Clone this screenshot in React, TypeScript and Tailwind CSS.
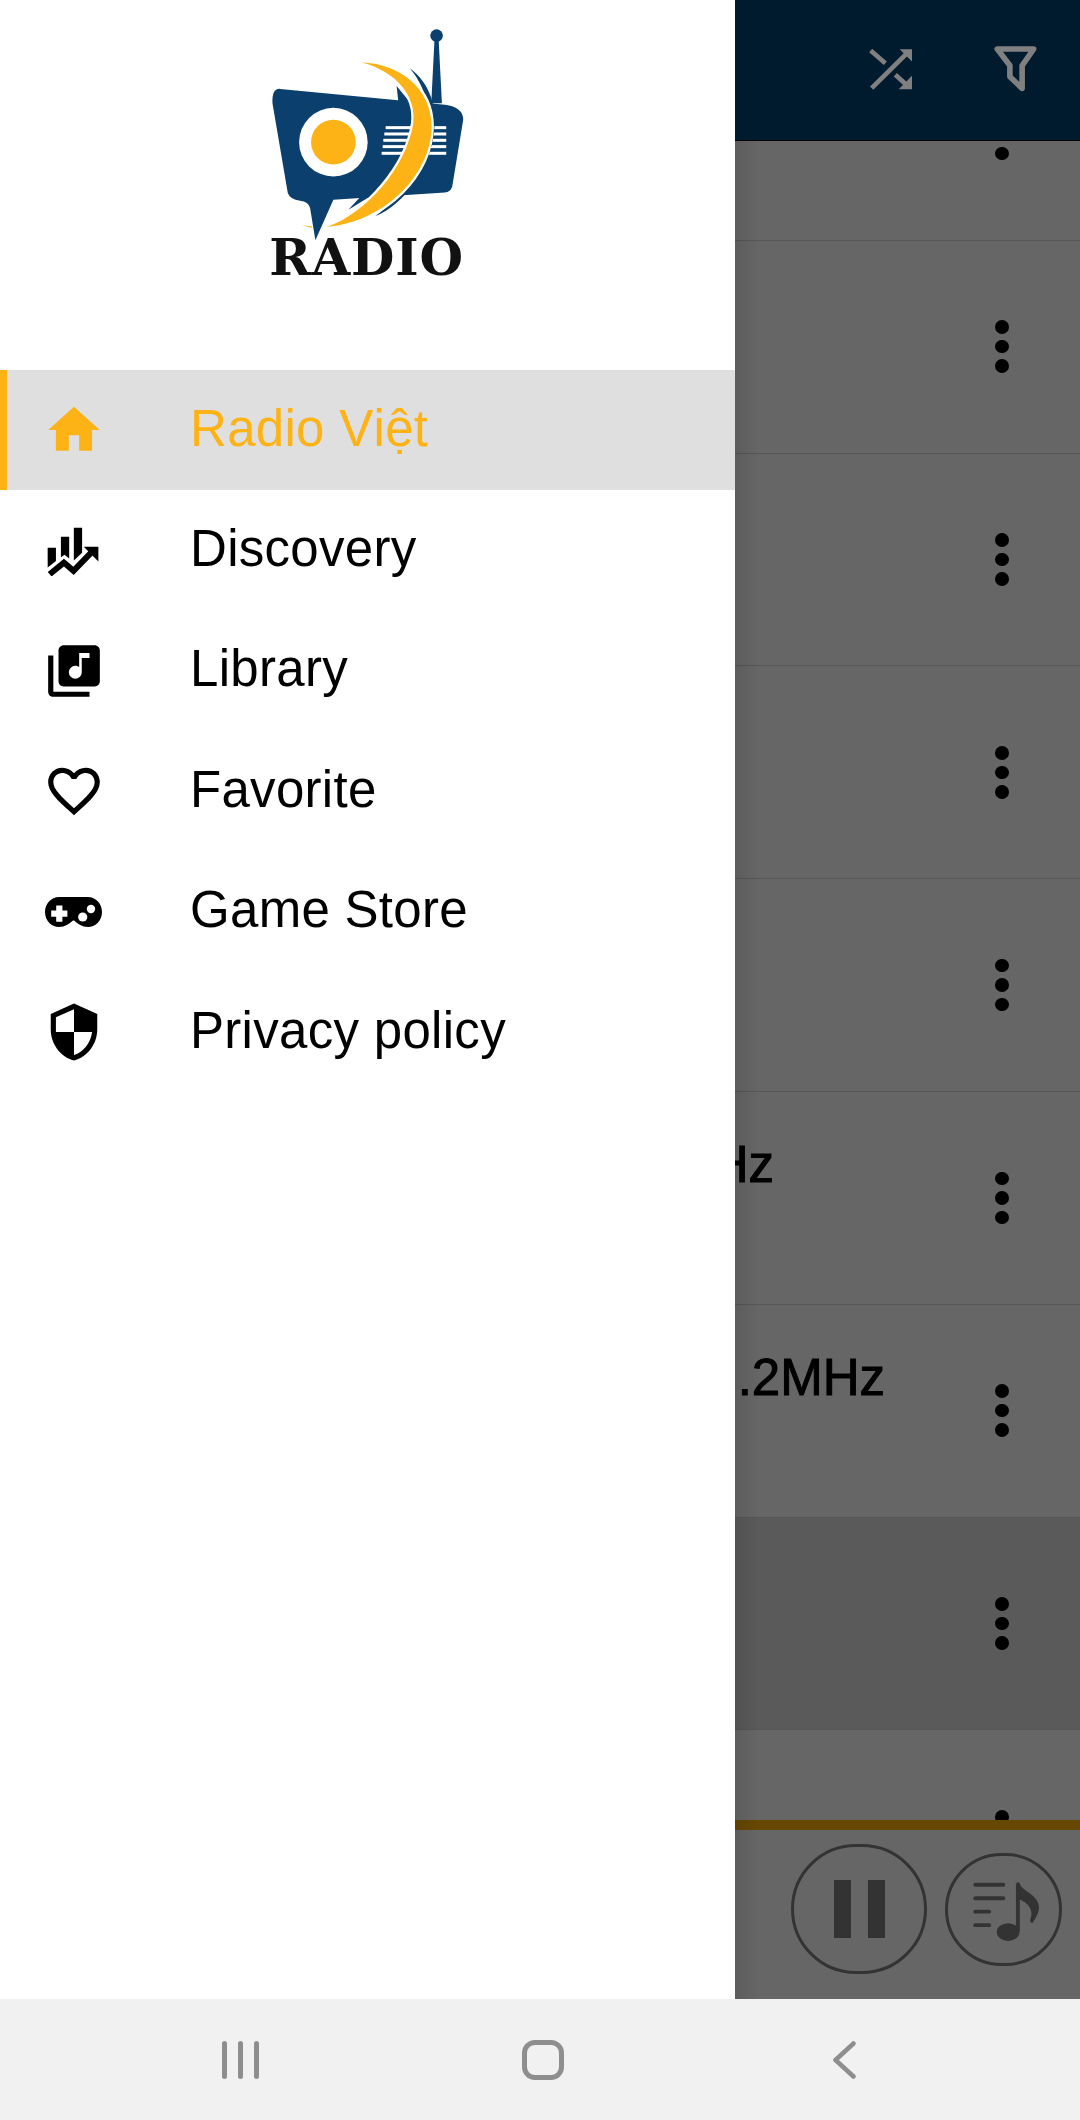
import { MdHome, MdLibraryMusic, MdFavoriteBorder, MdSecurity } from "react-icons/md";
import type { ReactNode } from "react";

const NAVY = "#0a3f6e";
const GOLD = "#fdb216";

function RadioLogo() {
  return (
    <svg viewBox="0 0 1020 730" className="h-[243px] w-[340px]">
      {/* antenna */}
      <circle cx="710" cy="107" r="19" fill={NAVY} />
      <path d="M704 115 L716 115 L726 310 L694 310 Z" fill={NAVY} />
      {/* body */}
      <path
        d="M240 267 L735 315 Q790 322 790 360 L757 560 Q752 577 735 578 L400 600 L346 722 L330 625 Q325 605 300 603 Q270 600 263 580 L217 310 Q215 265 240 267 Z"
        fill={NAVY}
      />
      <path d="M445 630 L482 590 L510 590 Z" fill={NAVY} />
      <path d="M590 258 L628 305 L595 305 Z" fill={NAVY} />
      <circle cx="400" cy="427" r="103" fill="#fff" />
      <circle cx="400" cy="427" r="67" fill={GOLD} />
      {/* speaker */}
      <g fill="#fff">
        <rect x="557" y="379" width="182" height="9" />
        <rect x="553" y="398" width="186" height="9" />
        <rect x="550" y="417" width="189" height="9" />
        <rect x="548" y="436" width="191" height="9" />
        <rect x="545" y="456" width="194" height="9" />
      </g>
      {/* crescent */}
      <path
        d="M630 205 C690 250 712 320 702 400 C690 500 620 610 525 650 C610 590 670 490 682 390 C692 310 670 255 630 205 Z"
        fill={NAVY}
      />
      <path
        d="M485 188 C590 190 695 260 695 380 C695 520 560 665 380 682 C500 640 620 500 640 370 C650 290 590 215 485 188 Z"
        fill={GOLD}
        stroke="#fff"
        strokeWidth="14"
        paintOrder="stroke"
      />
      <path d="M305 677 L335 680 L335 684 Z" fill={GOLD} />
    </svg>
  );
}

function DiscoveryIcon() {
  return (
    <svg viewBox="25 20 160 150" className="h-[50px] w-[53px]">
      <path d="M27 85 H52 V125 L27 145 Z" fill="#000" />
      <path d="M67 52 H92 V118 L78 106 L67 114 Z" fill="#000" />
      <path d="M106 25 H131 V100 L106 124 Z" fill="#000" />
      <path d="M33 165 L76 130 L105 155 L162 96" fill="none" stroke="#000" strokeWidth="18" />
      <path d="M136 82 H180 V127 Z" fill="#000" />
    </svg>
  );
}

function GamepadIcon() {
  return (
    <svg viewBox="0 0 57 30" className="h-[30px] w-[57px]">
      <path
        d="M14 0 H43 C51 0 57 7 57 15 C57 24 50 30 43 30 C37 30 33 27 29 23.5 H28 C24 27 20 30 14 30 C7 30 0 24 0 15 C0 7 6 0 14 0 Z"
        fill="#000"
      />
      <path d="M11.2 8.5 H17.4 V13.5 H22.4 V19.7 H17.4 V24.7 H11.2 V19.7 H6.2 V13.5 H11.2 Z" fill="#fff" />
      <circle cx="37.7" cy="20" r="4.6" fill="#fff" />
      <circle cx="46" cy="12" r="4.2" fill="#fff" />
    </svg>
  );
}

type DrawerItem = { label: string; icon: ReactNode; active?: boolean };

const drawerItems: DrawerItem[] = [
  { label: "Radio Việt", icon: <MdHome size={62} />, active: true },
  { label: "Discovery", icon: <DiscoveryIcon /> },
  { label: "Library", icon: <MdLibraryMusic size={62} /> },
  { label: "Favorite", icon: <MdFavoriteBorder size={62} /> },
  { label: "Game Store", icon: <GamepadIcon /> },
  { label: "Privacy policy", icon: <MdSecurity size={62} /> },
];

function DrawerRow({ item }: { item: DrawerItem }) {
  return (
    <div
      className={`flex h-[120.4px] items-center ${
        item.active
          ? "border-l-[7px] border-[#fdb216] bg-[#dfdfdf] text-[#fdb216]"
          : "pl-[7px] text-black"
      }`}
    >
      <div className="flex w-[133px] shrink-0 items-center justify-center">
        {item.icon}
      </div>
      <span className="mb-[4px] pl-[50px] text-[51px] leading-none tracking-[0.3px] [font-kerning:none]">
        {item.label}
      </span>
    </div>
  );
}

type Station = { title?: string; titleWidth?: string; selected?: boolean };

const stations: Station[] = [
  {},
  {},
  {},
  {},
  {},
  { title: "MHz", titleWidth: "w-[774px]" },
  { title: ".2MHz", titleWidth: "w-[885px]" },
  { selected: true },
  {},
];

function StationRow({ station }: { station: Station }) {
  return (
    <div
      className={`relative flex h-[212.8px] shrink-0 border-b border-[#d8d8d8] ${
        station.selected ? "bg-[#e0e0e0]" : "bg-white"
      }`}
    >
      {station.title && (
        <div
          className={`${station.titleWidth} pt-[42px] text-right text-[51px] leading-[62px] text-black [-webkit-text-stroke:1px_black]`}
        >
          {station.title}
        </div>
      )}
      <div className="absolute top-0 bottom-0 left-[995px] flex flex-col justify-center gap-[6px]">
        <span className="size-[13.5px] rounded-full bg-black" />
        <span className="size-[13.5px] rounded-full bg-black" />
        <span className="size-[13.5px] rounded-full bg-black" />
      </div>
    </div>
  );
}

export default function App() {
  return (
    <div className="relative flex h-[2120px] w-[1080px] flex-col overflow-hidden bg-white font-['Liberation_Sans',sans-serif]">
      <div className="relative flex h-[1999px] shrink-0 flex-col">
        {/* header behind the drawer */}
        <div className="z-[21] flex h-[141px] shrink-0 items-center justify-end gap-[81px] border-b border-black bg-[#001a2e] pr-[43px] pb-[2px]">
          <svg viewBox="410 145 135 125" className="h-[42px] w-[45px]">
            <path d="M418 152 L462 190" fill="none" stroke="#808080" strokeWidth="14" />
            <path d="M421 265 L525 162" fill="none" stroke="#808080" strokeWidth="14" />
            <path d="M505 148 H542 V185 Z" fill="#808080" />
            <path d="M492 225 L525 255" fill="none" stroke="#808080" strokeWidth="14" />
            <path d="M542 228 V268 H502 Z" fill="#808080" />
          </svg>
          <svg
            viewBox="795 140 130 137"
            className="h-[46px] w-[43px]"
            fill="none"
            stroke="#808080"
            strokeWidth="17"
            strokeLinejoin="round"
          >
            <path d="M805 148 H915 L880 198 V267 L843 232 V198 Z" />
          </svg>
        </div>

        {/* station list */}
        <div className="min-h-0 flex-1 overflow-hidden">
          <div className="mt-[-113px] flex flex-col">
            {stations.map((station, i) => (
              <StationRow key={i} station={station} />
            ))}
          </div>
        </div>

        {/* mini player */}
        <div className="z-10 h-[10px] shrink-0 bg-[#ffb300]" />
        <div className="z-10 flex h-[169px] shrink-0 items-center justify-end gap-[18px] bg-white pr-[18px] pb-[11px]">
          <div className="flex h-[130px] w-[136px] items-center justify-center gap-[17px] rounded-full border-[3px] border-[#808080]">
            <span className="h-[58px] w-[17px] bg-[#808080]" />
            <span className="h-[58px] w-[17px] bg-[#808080]" />
          </div>
          <div className="flex h-[113px] w-[117px] items-center justify-center rounded-full border-[3px] border-[#808080]">
            <svg viewBox="30 87 200 180" className="h-[64px] w-[71px]" fill="#808080">
              <rect x="45" y="103" width="90" height="11" rx="5.5" />
              <rect x="45" y="141" width="90" height="11" rx="5.5" />
              <rect x="45" y="179" width="50" height="11" rx="5.5" />
              <rect x="45" y="217" width="50" height="11" rx="5.5" />
              <ellipse cx="143" cy="242" rx="32" ry="25" />
              <path d="M165 108 C167 100 174 100 176 106 C185 130 228 135 230 172 C230 190 218 205 214 214 C210 218 204 216 205 208 C214 185 208 165 176 150 V240 H165 Z" />
            </svg>
          </div>
        </div>

        {/* scrim over the page */}
        <div className="absolute inset-0 z-20 bg-black/60" />
        {/* drawer shadow */}
        <div className="absolute top-[141px] bottom-0 left-[735px] z-20 w-[24px] bg-gradient-to-r from-black/10 to-transparent" />

        {/* drawer */}
        <div className="absolute top-0 bottom-0 left-0 z-30 flex w-[735px] flex-col bg-white">
          <div className="flex h-[370px] shrink-0 flex-col pl-[200px]">
            <RadioLogo />
            <div className="mt-[-10px] w-[333px] text-center font-['DejaVu_Serif',serif] text-[50px] leading-[50px] font-bold tracking-[0.8px] text-[#111]">
              RADIO
            </div>
          </div>
          {drawerItems.map((item) => (
            <DrawerRow key={item.label} item={item} />
          ))}
        </div>
      </div>

      {/* android nav bar */}
      <div className="flex h-[121px] shrink-0 items-center justify-center bg-[#f1f1f1] pl-[5px]">
        <div className="flex w-[302px] justify-center gap-[11px]">
          <span className="h-[38px] w-[5px] rounded-full bg-[#8e8e8e]" />
          <span className="h-[38px] w-[5px] rounded-full bg-[#8e8e8e]" />
          <span className="h-[38px] w-[5px] rounded-full bg-[#8e8e8e]" />
        </div>
        <div className="flex w-[302px] justify-center">
          <span className="h-[40px] w-[42px] rounded-[13px] border-[5px] border-[#8e8e8e]" />
        </div>
        <div className="flex w-[302px] justify-center">
          <svg
            viewBox="0 0 23 38"
            className="h-[38px] w-[23px]"
            fill="none"
            stroke="#8e8e8e"
            strokeWidth="4.5"
            strokeLinecap="round"
            strokeLinejoin="round"
          >
            <path d="M20.5 2.5 L2.5 19 L20.5 35.5" />
          </svg>
        </div>
      </div>
    </div>
  );
}
